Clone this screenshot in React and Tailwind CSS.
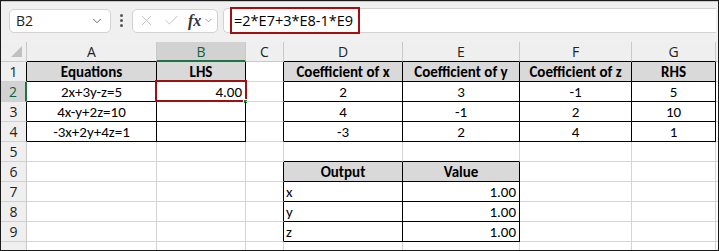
import { ChevronDown, X, Check } from 'lucide-react'

const COLS = ['A', 'B', 'C', 'D', 'E', 'F', 'G', 'H']
const ROWS = [1, 2, 3, 4, 5, 6, 7, 8, 9, 10]

// cell contents: h = gray header fill, a = alignment
const DATA = {
    '1A': { v: 'Equations', h: true }, '1B': { v: 'LHS', h: true },
    '1D': { v: 'Coefficient of x', h: true }, '1E': { v: 'Coefficient of y', h: true },
    '1F': { v: 'Coefficient of z', h: true }, '1G': { v: 'RHS', h: true },
    '2A': { v: '2x+3y-z=5' }, '2B': { v: '4.00', a: 'r' }, '2D': { v: '2' }, '2E': { v: '3' }, '2F': { v: '-1' }, '2G': { v: '5' },
    '3A': { v: '4x-y+2z=10' }, '3D': { v: '4' }, '3E': { v: '-1' }, '3F': { v: '2' }, '3G': { v: '10' },
    '4A': { v: '-3x+2y+4z=1' }, '4D': { v: '-3' }, '4E': { v: '2' }, '4F': { v: '4' }, '4G': { v: '1' },
    '6D': { v: 'Output', h: true }, '6E': { v: 'Value', h: true },
    '7D': { v: 'x', a: 'l' }, '7E': { v: '1.00', a: 'r' },
    '8D': { v: 'y', a: 'l' }, '8E': { v: '1.00', a: 'r' },
    '9D': { v: 'z', a: 'l' }, '9E': { v: '1.00', a: 'r' },
}

const inTable = (r, ci) => {
    if (r >= 1 && r <= 4 && ((ci >= 0 && ci <= 1) || (ci >= 3 && ci <= 6))) return true
    if (r >= 6 && r <= 9 && ci >= 3 && ci <= 4) return true
    return false
}

const cellFont = { fontFamily: 'Carlito, Calibri, Lato, sans-serif' }

export default function App() {
    return (
        <div className="w-[719px] h-[251px] border border-[#1a1a1a] overflow-hidden bg-white flex flex-col" style={{ fontFamily: '"Open Sans", sans-serif' }}>

            {/* Formula toolbar */}
            <div className="h-[41px] shrink-0 bg-[#f0f0f0] flex items-center pl-2 pr-0.5 pb-[3px] border-t border-t-[#c8c8c8]">
                <div className="w-[102px] h-6 bg-white border border-[#d2d2d2] rounded-[5px] flex items-center justify-between pl-[6px] pr-1.5 text-[14px] text-[#222]">
                    <span>B2</span>
                    <ChevronDown size={14} strokeWidth={1.5} className="text-[#555]" />
                </div>
                <div className="w-[21px] flex flex-col items-center gap-[2px]">
                    <span className="w-[3px] h-[3px] rounded-full bg-[#555]"></span>
                    <span className="w-[3px] h-[3px] rounded-full bg-[#555]"></span>
                    <span className="w-[3px] h-[3px] rounded-full bg-[#555]"></span>
                </div>
                <div className="w-[86px] h-6 bg-white border border-[#d2d2d2] rounded-[5px] flex items-center pl-[5px] gap-[8px] text-[#b4b4b4]">
                    <X size={17} strokeWidth={1.1} />
                    <Check size={17} strokeWidth={1.1} />
                    <div className="flex items-center gap-[2px]">
                        <span className="text-[16px] italic font-bold text-[#333] leading-none" style={{ fontFamily: '"Liberation Serif", serif' }}>fx</span>
                        <ChevronDown size={11} strokeWidth={1.5} className="text-[#777]" />
                    </div>
                </div>
                <div className="ml-[5px] flex-1 h-[25px] bg-white border border-[#d2d2d2] rounded-l-[5px] border-r-0 flex items-center pl-[6px]">
                    <span className="h-[27px] w-[130px] border-2 border-[#a01010] flex items-center pl-[2px] text-[14.5px] text-black">=2*E7+3*E8-1*E9</span>
                </div>
            </div>

            {/* Sheet */}
            <div className="grid grid-cols-[26px_130px_89px_38px_119px_117px_112px_84px_1fr] grid-rows-[20px_repeat(9,20px)_20px] text-[15px] text-black">

                {/* Column header row */}
                <div className="h-5 bg-[#efefef] border-r border-b border-r-[#c9c9c9] border-b-[#c9c9c9] relative">
                    <div className="absolute right-[4px] bottom-[4px] w-0 h-0 border-l-[11px] border-l-transparent border-b-[11px] border-b-[#c0c0c0]"></div>
                </div>
                {COLS.map((c, ci) => {
                    const selected = c === 'B'
                    const black = inTable(1, ci)
                    return (
                        <div
                            key={c}
                            className={`h-5 flex items-center justify-center text-[14px] border-r border-r-[#c9c9c9]
                                ${selected ? 'bg-[#d2d2d2] text-[#15603a] border-b-2 border-b-[#217346]' : 'bg-[#efefef] text-[#222] border-b'}
                                ${!selected && black ? 'border-b-black' : ''}
                                ${!selected && !black ? 'border-b-[#c9c9c9]' : ''}
                                ${c === 'H' ? 'border-r-0' : ''}`}
                        >
                            {c === 'H' ? '' : c}
                        </div>
                    )
                })}

                {ROWS.map(r => (
                    [
                        <div
                            key={`h${r}`}
                            className={`h-5 flex items-center justify-center text-[14px] border-b border-b-[#d0d0d0]
                                ${r === 2 ? 'bg-[#d2d2d2] text-[#15603a] border-r-2 border-r-[#217346]' : 'bg-[#efefef] text-[#222] border-r'}
                                ${r !== 2 && inTable(r, 0) ? 'border-r-black' : ''}
                                ${r !== 2 && !inTable(r, 0) ? 'border-r-[#c9c9c9]' : ''}`}
                        >
                            {r < 10 ? r : ''}
                        </div>,
                        ...COLS.map((c, ci) => {
                            const d = DATA[`${r}${c}`]
                            const right = inTable(r, ci) || inTable(r, ci + 1)
                            const bottom = inTable(r, ci) || inTable(r + 1, ci)
                            const align = d?.a === 'r' ? 'justify-end pr-[3px]' : d?.a === 'l' ? 'justify-start pl-[2px]' : 'justify-center'
                            return (
                                <div
                                    key={`${r}${c}`}
                                    style={cellFont}
                                    className={`h-5 flex items-center whitespace-nowrap relative border-b pt-px
                                        ${c === 'H' ? '' : 'border-r'}
                                        ${right ? 'border-r-black' : 'border-r-[#d4d4d4]'}
                                        ${bottom ? 'border-b-black' : 'border-b-[#d4d4d4]'}
                                        ${d?.h ? 'bg-[#d9d9d9] font-bold' : ''}
                                        ${align}`}
                                >
                                    {d?.v}
                                    {r === 2 && c === 'B' && (
                                        <>
                                            <div className="absolute -left-[2px] -top-[2px] -right-[2px] -bottom-[1px] border-2 border-[#a01010] pointer-events-none"></div>
                                            <div className="absolute -right-[3px] -bottom-[3px] w-[5px] h-[5px] bg-[#217346] border border-white"></div>
                                        </>
                                    )}
                                </div>
                            )
                        })
                    ]
                ))}
            </div>
        </div>
    )
}
